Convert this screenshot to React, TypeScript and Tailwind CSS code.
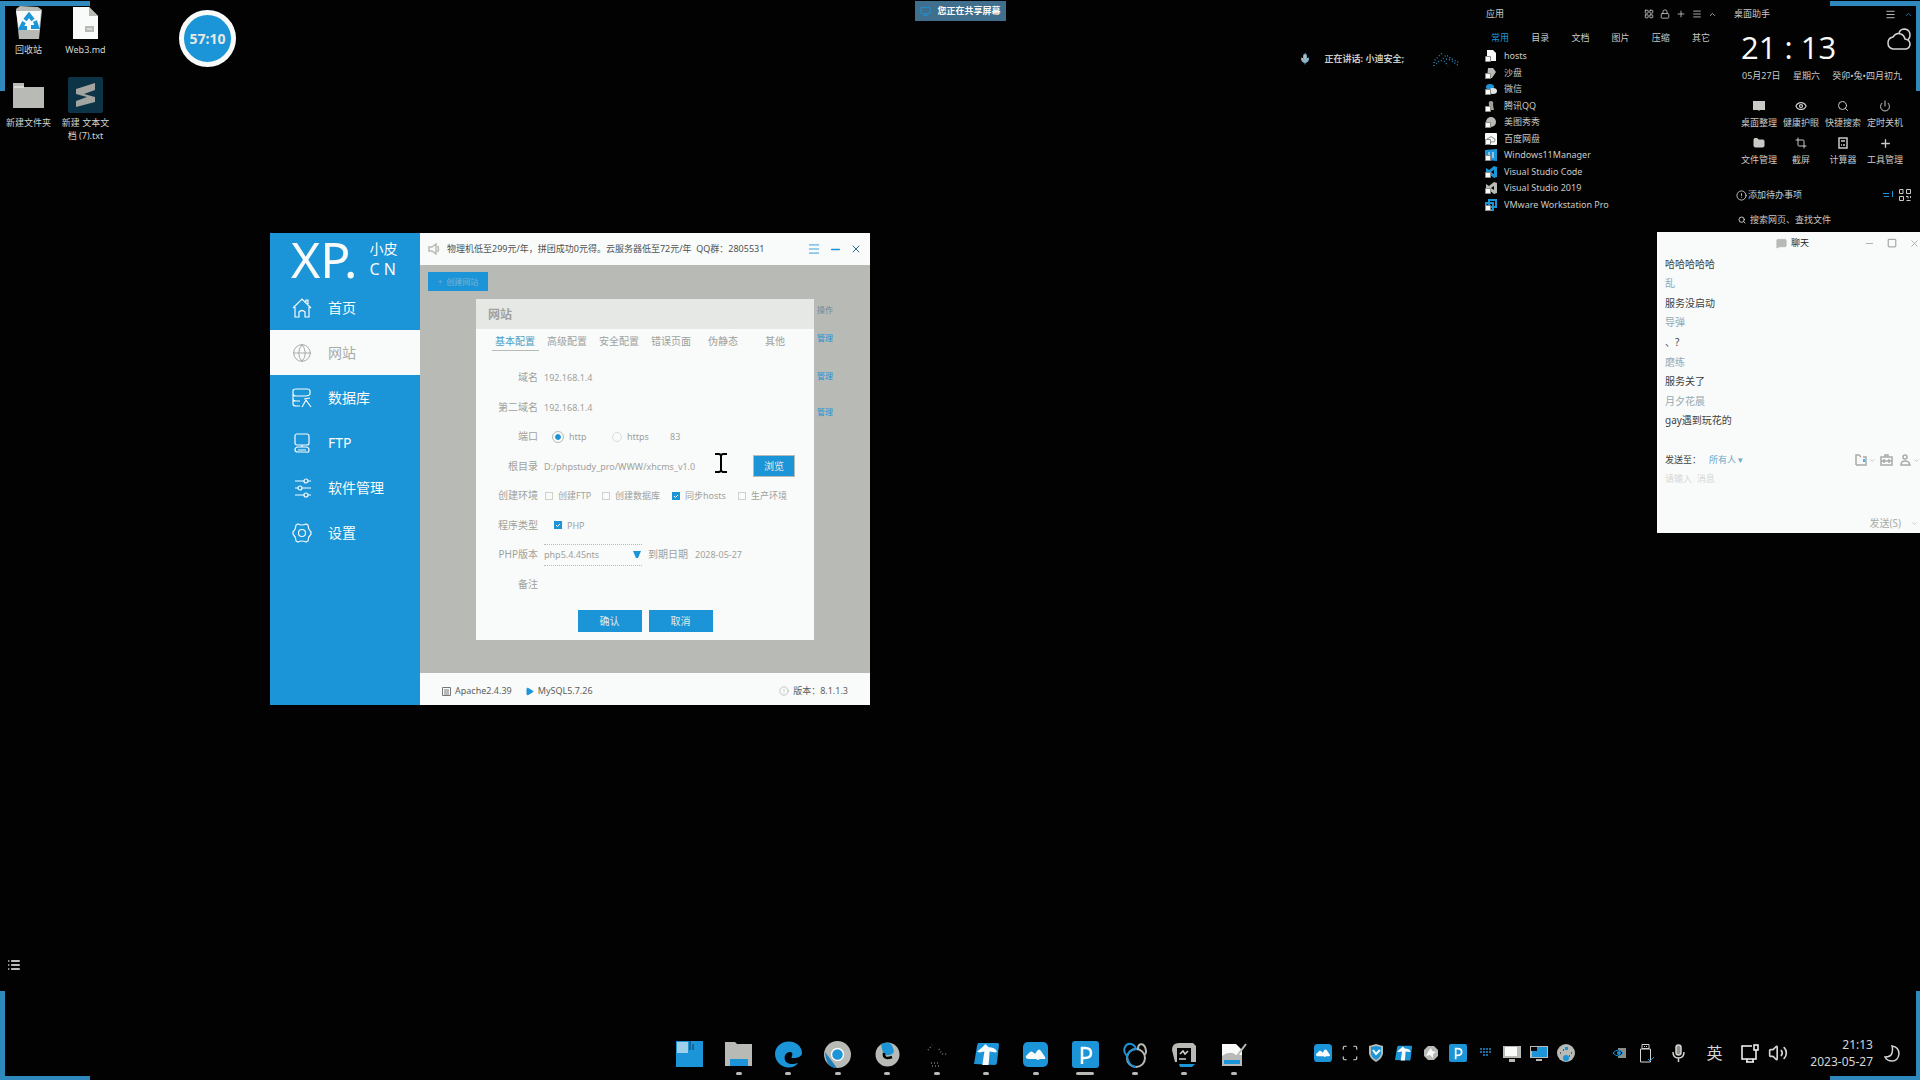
import React, { useState } from "react";
import {
  Globe, Monitor, Menu, Minus, X,
  Plus, ChevronUp, ChevronDown, LayoutGrid, Lock, Cloud, Eye, Search, Power, Folder, Crop,
  Mic, MessageSquare, Square, CircleAlert, Play,
  Scan, List, Volume2,
} from "lucide-react";

const CJK = "font-['Noto_Sans','Noto_Sans_CJK_SC',sans-serif]";

function Corners() {
  return (
    <div aria-hidden="true">
      <div className="absolute left-0 top-px h-[90px] w-[90px] border-l-[5px] border-t-[5px] border-[#2f89bd]" />
      <div className="absolute right-0 top-px h-[90px] w-[90px] border-r-4 border-t-[5px] border-[#2f89bd]" />
      <div className="absolute bottom-0 left-0 h-[89px] w-[90px] border-b-4 border-l-[5px] border-[#2f89bd]" />
      <div className="absolute bottom-0 right-0 h-[89px] w-[90px] border-b-4 border-r-4 border-[#2f89bd]" />
    </div>
  );
}

function DesktopIcon({ label, children }: { label: string; children: React.ReactNode }) {
  return (
    <button className="flex w-[57px] flex-col items-center">
      <span className="flex h-[37px] items-end justify-center">{children}</span>
      <span className="mt-[3px] w-[50px] text-center text-[9px] leading-[13px] text-[#d3d5d1]">{label}</span>
    </button>
  );
}

function DesktopIcons() {
  return (
    <div className="absolute left-0 top-[3px] grid grid-cols-[57px_57px] items-start gap-y-5">
      <DesktopIcon label="回收站">
        <svg width="28" height="34" viewBox="0 0 28 34">
          <path d="M1 3 5 0l18 1 4 3-3 29H4z" fill="#b8bab5" />
          <path d="M1 5h25l-2 19H4z" fill="#f9fbfa" />
          <g stroke="#1c94d8" strokeWidth="4" fill="none">
            <path d="m10 14 4-5 4 5" /><path d="m20 15 2 6h-6" /><path d="m12 22H6l3-6" />
          </g>
        </svg>
      </DesktopIcon>
      <DesktopIcon label="Web3.md">
        <svg width="26" height="34" viewBox="0 0 26 34">
          <path d="M0 1h16l9 9v23H0z" fill="#f9fbfa" />
          <path d="M16 1v9h9z" fill="#b8bab5" />
          <path d="M12 20h9v6h-9z" fill="#b8bab5" />
          <path d="M14 23h5" stroke="#f9fbfa" />
        </svg>
      </DesktopIcon>
      <DesktopIcon label="新建文件夹">
        <svg width="31" height="28" viewBox="0 0 31 28" className="mb-1">
          <path d="M0 2h11v4h20v21H0z" fill="#b8bab5" />
          <path d="M1 6h10" stroke="#f9fbfa" />
        </svg>
      </DesktopIcon>
      <DesktopIcon label="新建 文本文档 (7).txt">
        <svg width="35" height="36" viewBox="0 0 35 36">
          <rect width="35" height="36" rx="2" fill="#0d3347" />
          <path d="M8 12 27 6v7l-11 4 11 3v5L8 30v-6l11-4-11-3z" fill="#a3a5a1" />
        </svg>
      </DesktopIcon>
    </div>
  );
}

const APPS: [string, React.ReactNode][] = [
  ["hosts", <path key="0" d="M2 0h6l3 3v8H2z" fill="#f9fbfa" />],
  ["沙盘", <path key="1" d="M3 1h5l3 4-4 6H2z" fill="#b8bab5" />],
  ["微信", <g key="2"><ellipse cx="5" cy="4" rx="4" ry="3" fill="#1c94d8" /><ellipse cx="8" cy="8" rx="4" ry="3" fill="#e3e5e2" /></g>],
  ["腾讯QQ", <path key="3" d="M6 1q3 0 2 4l1 5H3l1-5q-1-4 2-4z" fill="#9fa19d" />],
  ["美图秀秀", <circle key="4" cx="6" cy="6" r="5" fill="#b8bab5" />],
  ["百度网盘", <g key="5"><rect width="12" height="12" rx="1" fill="#f9fbfa" /><path d="M2 7q0-2 2-2 2-3 4 0 2 0 2 2t-2 2H4Q2 9 2 7z" stroke="#8b8d89" fill="none" /></g>],
  ["Windows11Manager", <g key="6"><path d="M0 1 12 0v12L0 11z" fill="#1c94d8" /><path d="M4 3v6M8 3v6" stroke="#f9fbfa" /></g>],
  ["Visual Studio Code", <path key="7" d="m9 0 3 1v10l-3 1-5-4-3 2V2l3 2zM9 4 6 6l3 2z" fill="#1c94d8" />],
  ["Visual Studio 2019", <path key="8" d="m9 0 3 1v10l-3 1-5-4-3 2V2l3 2zM9 4 6 6l3 2z" fill="#b8bab5" />],
  ["VMware Workstation Pro", <path key="9" d="M4 1h7v7H4zM1 4h7v7H1z" stroke="#1c94d8" strokeWidth="2" fill="none" />],
];

function AppPanel() {
  const tabs = ["常用", "目录", "文档", "图片", "压缩", "其它"];
  return (
    <section className="absolute right-[199px] top-2 w-[241px] text-[9px] leading-3 text-[#c8cac6]">
      <header className="flex items-center justify-between pl-[6px] pr-1">
        <h2>应用</h2>
        <div className="flex items-center gap-[6px]">
          <button aria-label="网格"><LayoutGrid size={10} /></button>
          <button aria-label="锁定"><Lock size={10} /></button>
          <button aria-label="添加"><Plus size={10} /></button>
          <button aria-label="菜单"><Menu size={10} /></button>
          <button aria-label="收起"><ChevronUp size={9} /></button>
        </div>
      </header>
      <nav className="mt-3 grid grid-cols-6">
        {tabs.map((t, i) => (
          <button key={t} className={i === 0 ? "text-[#1c94d8]" : ""}>{t}</button>
        ))}
      </nav>
      <ul className="mt-[6px] flex h-[161px] flex-col justify-between pl-[5px]">
        {APPS.map(([name, art]) => (
          <li key={name}>
            <button className="flex items-center gap-[7px]">
              <svg width="12" height="12" viewBox="0 0 12 12">
                {art}
                <path d="M.5 6.500h5v5h-5z" fill="#f9fbfa" stroke="#8b8d89" />
              </svg>
              <span className="whitespace-nowrap">{name}</span>
            </button>
          </li>
        ))}
      </ul>
    </section>
  );
}

function Assistant() {
  const tools: [string, React.ReactNode][] = [
    ["桌面整理", <svg key="a" width="12" height="10"><path d="M0 0h12v9H7l-1 1-1-1H0z" fill="currentColor" /></svg>],
    ["健康护眼", <Eye key="b" size={12} strokeWidth={2.5} />],
    ["快捷搜索", <Search key="c" size={12} />],
    ["定时关机", <Power key="d" size={12} />],
    ["文件管理", <Folder key="e" size={12} fill="currentColor" />],
    ["截屏", <Crop key="f" size={12} />],
    ["计算器", <svg key="g" width="10" height="12"><path d="M1 1h8v10H1zM3 4h4M3 8h1M5 8h2" stroke="currentColor" strokeWidth="1.500" fill="none" /></svg>],
    ["工具管理", <Plus key="h" size={13} strokeWidth={2.5} />],
  ];
  return (
    <section className="absolute right-0 top-2 w-[186px] text-[9px] leading-3 text-[#c8cac6]">
      <header className="flex items-center justify-between pr-[7px]">
        <h2>桌面助手</h2>
        <div className="flex items-center gap-2">
          <button aria-label="菜单"><Menu size={11} /></button>
          <button aria-label="收起" className="text-[#1c94d8]"><ChevronUp size={9} /></button>
        </div>
      </header>
      <div className="flex items-start justify-between pl-[7px] pr-2">
        <time className="mt-[7px] whitespace-pre font-['Open_Sans','Noto_Sans',sans-serif] text-[31px] leading-10 text-[#f9fbfa]">21 : 13</time>
        <svg width="25" height="24" viewBox="0 0 25 24" className="mt-2 text-[#d3d5d1]" fill="none" stroke="currentColor" strokeWidth="1.500">
          <path d="M6 21q-5-1-5-6 0-5 5-6 3-5 8-3 3 1 4 5 5 1 5 5t-4 5z" />
          <path d="M12 5q1-4 6-4 5 1 5 6 0 3-2 5" />
        </svg>
      </div>
      <div className="mt-px flex justify-between whitespace-nowrap pl-2 pr-[18px] pt-[2px]">
        <span>05月27日</span><span>星期六</span><span>癸卯•兔•四月初九</span>
      </div>
      <div className="mt-[18px] grid w-[172px] grid-cols-4 gap-y-2 pl-1">
        {tools.map(([n, icon]) => (
          <button key={n} className="flex flex-col items-center gap-[5px] whitespace-nowrap">
            <span className="flex h-3 items-center">{icon}</span>
            <span>{n}</span>
          </button>
        ))}
      </div>
      <div className="mt-[23px] flex items-center justify-between pl-[2px] pr-[9px]">
        <button className="flex items-center gap-px"><CircleAlert size={11} />添加待办事项</button>
        <span className="flex items-center gap-[6px]">
          <svg width="10" height="9" className="text-[#1c94d8]" stroke="currentColor"><path d="M0 2.500h6M1 5.500h5M9.500 0v6" /></svg>
          <svg width="12" height="12" stroke="currentColor" fill="none"><path d="M1 .5h3v4H.5v-4M7.500.5h4v4h-4zM.5 7.500h4v4h-4zM7 7.500h2v2M11.500 7v2M7.500 11.500h4" /></svg>
        </span>
      </div>
      <label className="mt-[13px] flex items-center gap-1 pl-1">
        <Search size={8} strokeWidth={3} />
        <input aria-label="搜索" placeholder="搜索网页、查找文件" className="w-32 bg-transparent leading-3 outline-none placeholder:text-[#c8cac6]" />
      </label>
    </section>
  );
}

function Line({ children }: { children: React.ReactNode }) {
  return <svg width="20" height="20" viewBox="0 0 20 20" fill="none" stroke="currentColor" strokeWidth="1.200">{children}</svg>;
}

const MENU: [string, React.ReactNode][] = [
  ["首页", <Line key="1"><path d="M1 10 10 1l9 9M14 4V2h2v4M3 9v10h4v-5q3-3 6 0v5h4V9" /></Line>],
  ["网站", <Globe key="2" size={20} strokeWidth={1.2} />],
  ["数据库", <Line key="3"><path d="M1 3q0-2 3-2h11q3 0 3 2v3q-1 2-4 2H4Q1 8 1 5zM1 6v5q0 2 3 2h4M1 11v5q0 2 3 2h4M10 19l4-7 5 7M12 11l6-1" /></Line>],
  ["FTP", <Line key="4"><rect x="3" y="1" width="14" height="11" rx="2" /><path d="M10 12v2M3 17q0-3 3-3h8q3 0 3 3t-3 2H6q-3 0-3-2zM6 17h8" /></Line>],
  ["软件管理", <Line key="5"><path d="M3 3h9M16 3h3M3 10h3M10 10h9M3 17h9M16 17h3" /><circle cx="14" cy="3" r="2" /><circle cx="8" cy="10" r="2" /><circle cx="14" cy="17" r="2" /></Line>],
  ["设置", <Line key="6"><path d="M6 1q4 2 8 0l2 1q0 4 3 7v2q-3 3-3 7l-2 1q-4-2-8 0l-2-1q0-4-3-7V9q3-3 3-7z" /><circle cx="10" cy="10" r="3.500" /></Line>],
];

function Row({ label, htmlFor, children }: { label: string; htmlFor?: string; children?: React.ReactNode }) {
  return (
    <div className="grid grid-cols-[62px_1fr] items-center gap-x-[6px]">
      <label htmlFor={htmlFor} className="whitespace-nowrap text-right text-[10px]">{label}</label>
      <div className="flex items-center text-[9px]">{children}</div>
    </div>
  );
}

function Check({ label, on, className = "" }: { label: string; on?: boolean; className?: string }) {
  return (
    <label className={`flex items-center gap-[5px] whitespace-nowrap ${className}`}>
      <span className="relative flex h-[8px] w-[8px]">
        <input type="checkbox" defaultChecked={on} className="peer h-[8px] w-[8px] appearance-none border border-[#cfd1cd] checked:border-[#1c94d8] checked:bg-[#1c94d8]" />
        <svg viewBox="0 0 8 8" className="pointer-events-none absolute inset-0 hidden peer-checked:block"><path d="m2 4 1.500 1.500L6 3" stroke="#f9fbfa" fill="none" /></svg>
      </span>
      {label}
    </label>
  );
}

function SiteDialog() {
  const tabs = ["基本配置", "高级配置", "安全配置", "错误页面", "伪静态", "其他"];
  return (
    <form role="dialog" aria-label="网站" onSubmit={(e) => e.preventDefault()} className="absolute left-[56px] top-[34px] flex h-[341px] w-[338px] flex-col bg-[#f9fbfa] text-[#9fa19d]">
      <h3 className="h-[30px] bg-[#e6e8e5] pl-3 text-[12px] font-bold leading-[32px]">网站</h3>
      <div className="flex h-[34px] items-start px-[13px] pt-[3px] text-[10px]">
        {tabs.map((t, i) => (
          <button key={t} type="button" className="w-[52px]">
            <span className={i === 0 ? "mx-auto block h-[19px] w-[47px] border-b border-[#b8bab5] leading-[18px] text-[#4f9cc4]" : "block h-[19px] leading-[18px]"}>{t}</span>
          </button>
        ))}
      </div>
      <div className="grid flex-1 auto-rows-fr">
        <Row label="域名" htmlFor="domain"><input id="domain" defaultValue="192.168.1.4" className="w-48 bg-transparent outline-none" /></Row>
        <Row label="第二域名" htmlFor="domain2"><input id="domain2" defaultValue="192.168.1.4" className="w-48 bg-transparent outline-none" /></Row>
        <Row label="端口" htmlFor="port">
          <label className="ml-2 flex w-[60px] items-center gap-[5px]">
            <input type="radio" name="scheme" defaultChecked className="h-[12px] w-[12px] appearance-none rounded-full border border-[#b8bab5] bg-[#f9fbfa] checked:bg-[radial-gradient(#1c94d8_35%,#f9fbfa_45%)]" />http
          </label>
          <label className="flex w-[58px] items-center gap-[5px]">
            <input type="radio" name="scheme" className="h-[10px] w-[10px] appearance-none rounded-full border border-[#dcdedb]" />https
          </label>
          <input id="port" defaultValue="83" className="w-8 bg-transparent outline-none" />
        </Row>
        <Row label="根目录" htmlFor="root">
          <input id="root" defaultValue="D:/phpstudy_pro/WWW/xhcms_v1.0" className="w-[209px] bg-transparent outline-none" />
          <button type="button" className="h-[22px] w-[42px] border border-[#b8bab5] bg-[#1c94d8] text-[10px] text-[#e6e8e5]">浏览</button>
        </Row>
        <Row label="创建环境">
          <Check label="创建FTP" className="w-[58px] pl-px" />
          <Check label="创建数据库" className="w-[70px]" />
          <Check label="同步hosts" on className="w-[66px]" />
          <Check label="生产环境" />
        </Row>
        <Row label="程序类型"><Check label="PHP" on className="pl-[10px]" /></Row>
        <Row label="PHP版本" htmlFor="php">
          <span className="relative mr-[6px] flex h-[22px] w-[98px] items-center border-y border-dotted border-[#b8bab5]">
            <select id="php" className="w-full appearance-none bg-transparent outline-none"><option>php5.4.45nts</option></select>
            <svg width="8" height="7" className="pointer-events-none absolute right-px top-[6px]"><path d="M0 0h8L5 7H3z" fill="#1c94d8" /></svg>
          </span>
          <label htmlFor="expiry" className="w-[47px] text-[10px]">到期日期</label>
          <input id="expiry" defaultValue="2028-05-27" className="w-20 bg-transparent outline-none" />
        </Row>
        <Row label="备注" htmlFor="memo"><input id="memo" className="w-48 bg-transparent outline-none" /></Row>
      </div>
      <div className="flex h-[41px] items-start justify-center gap-[7px] pt-[11px] text-[10px] text-[#e6e8e5]">
        <button type="submit" className="h-[22px] w-[64px] bg-[#1c94d8]">确认</button>
        <button type="button" className="h-[22px] w-[64px] bg-[#1c94d8]">取消</button>
      </div>
    </form>
  );
}

function PhpStudy() {
  const [active, setActive] = useState("网站");
  return (
    <section className="absolute left-[270px] top-[233px] flex h-[472px] w-[600px] bg-[#f9fbfa]">
      <aside className="w-[150px] bg-[#1c94d8] text-[#f9fbfa]">
        <div className="flex h-[52px] items-center gap-3 pl-[21px]">
          <span className="font-['Noto_Sans',sans-serif] text-[50px] leading-[50px]">XP.</span>
          <span className="flex flex-col whitespace-nowrap text-[14px] leading-5"><span>小皮</span><span className="text-[16px]">C N</span></span>
        </div>
        <nav>
          {MENU.map(([name, icon]) => (
            <button
              key={name}
              onClick={() => setActive(name)}
              className={name === active
                ? "flex h-[45px] w-full items-center bg-[#f9fbfa] pl-[22px] text-[14px] text-[#a9aba7]"
                : "flex h-[45px] w-full items-center pl-[22px] text-[14px]"}
            >
              <span className="w-9">{icon}</span>{name}
            </button>
          ))}
        </nav>
      </aside>
      <div className="flex flex-1 flex-col">
        <header className="flex h-8 items-center pl-2 pr-2 text-[9px] text-[#4f5150]">
          <svg width="12" height="12" viewBox="0 0 12 12" stroke="#b8bab5" strokeWidth="1.500" fill="none"><path d="M1 4h3l4-3v10L4 8H1zM9.500 3q2 3 0 6" /></svg>
          <p className="ml-[7px] flex-1 whitespace-pre pb-px">物理机低至299元/年，拼团成功0元得。云服务器低至72元/年  QQ群：2805531</p>
          <div className="flex items-center gap-2 text-[#1c94d8]">
            <button aria-label="菜单"><Menu size={14} strokeWidth={1.5} /></button>
            <button aria-label="最小化"><Minus size={13} strokeWidth={3} /></button>
            <button aria-label="关闭" className="text-[#2b6f96]"><X size={12} /></button>
          </div>
        </header>
        <main className="relative flex-1 bg-[#b8bab5]">
          <button className="ml-2 mt-[7px] block h-[19px] w-[60px] bg-[#1c94d8] text-[8px] text-[#7fb1cb]">+&nbsp; 创建网站</button>
          <div className="absolute right-[37px] top-[39px] flex flex-col text-[8px] text-[#1c94d8]">
            <span className="h-7 text-[#6d8a98]">操作</span>
            <a href="#m1" className="h-[38px]">管理</a>
            <a href="#m2" className="h-9">管理</a>
            <a href="#m3">管理</a>
          </div>
          <SiteDialog />
          <svg width="12" height="20" viewBox="0 0 12 20" className="absolute left-[295px] top-[188px]" aria-hidden="true">
            <path d="M0 1h4l2 1 2-1h4M6 2v16M0 19h4l2-1 2 1h4" stroke="#020202" strokeWidth="2" fill="none" />
          </svg>
        </main>
        <footer className="flex h-8 items-center pl-[22px] pr-[22px] pt-1 text-[9px] text-[#5c5e5c]">
          <svg width="9" height="9" className="mr-1"><path d="M.5.5h8v8h-8zM2 3h5M2 5h5M2 7h5" stroke="#777" fill="none" /></svg>
          <span>Apache2.4.39</span>
          <Play size={9} className="ml-[13px] mr-1 fill-[#1c94d8] text-[#1c94d8]" />
          <span>MySQL5.7.26</span>
          <CircleAlert size={10} className="ml-auto mr-1 text-[#b8bab5]" />
          <span>版本：8.1.1.3</span>
        </footer>
      </div>
    </section>
  );
}

function Chat() {
  const rows: [string, boolean][] = [
    ["哈哈哈哈哈", false], ["乱", true], ["服务没启动", false], ["导弹", true], ["、?", false],
    ["磨练", true], ["服务关了", false], ["月夕花晨", true], ["gay遇到玩花的", false],
  ];
  return (
    <section className="absolute right-0 top-[232px] flex h-[301px] w-[263px] flex-col overflow-hidden bg-[#f9fbfa] pl-2 text-[10px] text-[#3f4140]">
      <header className="grid h-[22px] grid-cols-[1fr_auto_1fr] items-center text-[9px] text-[#222]">
        <span />
        <h2 className="flex items-center gap-1"><MessageSquare size={11} className="fill-[#b8bab5] text-[#b8bab5]" />聊天</h2>
        <div className="flex items-center justify-end gap-3 text-[#a9aba7]">
          <button aria-label="最小化"><Minus size={11} /></button>
          <button aria-label="最大化"><Square size={10} strokeWidth={3} /></button>
          <button aria-label="关闭"><X size={11} /></button>
        </div>
      </header>
      <ul className="flex h-[176px] flex-col justify-around">
        {rows.map(([t, name]) => <li key={t} className={name ? "leading-4 text-[#93a9b4]" : "leading-4"}>{t}</li>)}
      </ul>
      <div className="mt-[22px] flex h-4 items-center text-[9px]">
        <label htmlFor="to">发送至：</label>
        <select id="to" className="ml-2 appearance-none bg-transparent text-[#6da9c9]"><option>所有人 ▾</option></select>
        <div className="ml-auto flex items-center text-[#a9aba7]">
          <svg width="12" height="12" fill="none" stroke="currentColor" strokeWidth="1.500"><path d="M1 11V1h3l2 2M8 3h3v8H1" /><path d="M9 5v3" stroke="#1c94d8" /></svg>
          <ChevronDown size={7} className="ml-[2px]" />
          <svg width="13" height="12" className="ml-1" fill="none" stroke="currentColor" strokeWidth="1.500"><path d="M1 3h11v8H1zM5 3V1h3v2M1 7h11M4 5v4M9 5v4" /></svg>
          <svg width="11" height="12" className="ml-[7px]" fill="none" stroke="currentColor" strokeWidth="1.500"><circle cx="5" cy="3" r="2" /><path d="M1 11q0-4 4-4t5 4z" /></svg>
          <ChevronDown size={7} className="ml-[2px]" />
        </div>
      </div>
      <textarea aria-label="消息" placeholder="请输入  消息" className="mt-1 flex-1 resize-none bg-transparent text-[9px] outline-none placeholder:text-[#d5d7d4]" />
      <div className="flex h-5 items-center justify-end gap-[10px] pr-[2px] text-[#a9aba7]">
        <button>发送(S)</button><ChevronDown size={7} />
      </div>
    </section>
  );
}

function TaskTile({ children, running = "small" }: { children: React.ReactNode; running?: "none" | "small" | "wide" }) {
  return (
    <button className="flex w-[27px] flex-col items-center">
      <span className="flex h-[27px] w-[27px] items-center justify-center">{children}</span>
      <span className={running === "none" ? "mt-1 h-[3px]" : running === "wide" ? "mt-1 h-[3px] w-[18px] rounded bg-[#b8bab5]" : "mt-1 h-[3px] w-[6px] rounded bg-[#b8bab5]"} />
    </button>
  );
}

function TIcon({ size }: { size: number }) {
  return (
    <svg width={size} height={size} viewBox="0 0 24 24">
      <path d="M4 1h19q1 0 1 2l-2 17q0 2-2 2L0 21 3 3z" fill="#1c94d8" />
      <path d="m3 9 5-4 3-3 3 3q6 0 8 4l-1 1-6-1-1 13H8l2-13-5 1z" fill="#f9fbfa" />
    </svg>
  );
}
function MIcon({ size }: { size: number }) {
  return (
    <svg width={size} height={size} viewBox="0 0 25 25">
      <rect width="25" height="25" rx="5" fill="#1c94d8" />
      <path d="M3 16q-1-2 1-3l2-2q2-3 5 0l1 1 2-3q2-3 4 0l4 6q1 2-1 2h-4l-2 1-2-1H5z" fill="#f9fbfa" />
    </svg>
  );
}
function PIcon({ size }: { size: number }) {
  return (
    <svg width={size} height={size} viewBox="0 0 27 27">
      <rect width="27" height="27" rx="3" fill="#1c94d8" />
      <path d="M10 23V7h3q6 0 6 5t-6 5h-3" stroke="#f9fbfa" strokeWidth="2.500" fill="none" />
    </svg>
  );
}

function Tray() {
  return (
    <div className="flex h-6 items-center justify-end pr-[10px]">
      <div className="grid grid-cols-[repeat(10,27px)] items-center justify-items-center">
        <MIcon size={18} />
        <Scan size={18} strokeWidth={1.5} />
        <svg width="17" height="18" viewBox="0 0 17 18"><path d="M1 2 8 0l7 2v7q0 5-7 9-7-4-7-9z" fill="#b8bab5" /><path d="M3 3 8 2l5 1v6q0 4-5 7-5-3-5-7z" fill="#1c94d8" /><path d="m5 6 3 4 4-4" stroke="#f9fbfa" strokeWidth="2" fill="none" /></svg>
        <TIcon size={17} />
        <svg width="16" height="16" viewBox="0 0 16 16"><path d="M5 1h6l4 4v6l-4 4H5l-4-4V5z" fill="#b8bab5" /><path d="m8 3 1 3 4 1-3 2v4L7 10l-4 1 2-4z" fill="#f9fbfa" /></svg>
        <PIcon size={18} />
        <svg width="12" height="14"><path d="M2 2v6M5 2v8M8 2v8M11 2v6" stroke="#1c6c9c" strokeWidth="2" strokeDasharray="2 1" /></svg>
        <svg width="18" height="17"><path d="M0 1h18v12H0zM6 14h6v3H6z" fill="#b8bab5" /><path d="M2 2h12v9H2z" fill="#f9fbfa" /></svg>
        <svg width="18" height="17"><path d="M0 1h18v12H0zM6 14h6v2H6z" fill="#b8bab5" /><path d="M2 2h15v10H2z" fill="#1c94d8" /><path d="M1 2h6v4H1z" fill="#020202" /></svg>
        <svg width="18" height="18"><circle cx="9" cy="9" r="9" fill="#b8bab5" /><circle cx="9" cy="14" r="3" fill="#1c94d8" /><path d="M8 3h3v3H8z" fill="#1c94d8" /><path d="M3 9h1M14 9h1M6 6h1M12 12h1" stroke="#020202" /></svg>
      </div>
      <span className="ml-[27px] flex w-[27px] justify-center"><svg width="13" height="10"><path d="M5 0h8v10H5z" fill="#8b8d89" /><path d="M0 5q6-6 10 0-4 6-10 0z" fill="#020202" stroke="#1c94d8" /><circle cx="6" cy="5" r="2" fill="#1c94d8" /></svg></span>
      <span className="flex w-[27px] justify-center"><svg width="14" height="19" fill="none" stroke="currentColor"><path d="M2 .5h7v4H2zM.5 5h10v13H.5z" /><path d="M4 2.500h1M6 2.500h1" /><path d="m8 15 2 2 4-4" stroke="#1c94d8" /></svg></span>
      <span className="flex w-[37px] justify-center"><svg width="13" height="18" viewBox="0 0 13 18" fill="none" stroke="currentColor" strokeWidth="1.500"><rect x="4" y="1" width="5" height="10" rx="2.500" fill="#8b8d89" /><path d="M1 8q0 6 5.500 6T12 8M6.500 14v4" /></svg></span>
      <span className="w-[35px] text-center text-[16px] leading-6">英</span>
      <span className="flex w-[35px] justify-center"><svg width="18" height="19" viewBox="0 0 18 19" fill="none" stroke="#f9fbfa" strokeWidth="1.500"><path d="M11 2H1v13h14V9M5 18h8M6 15v3M12 15v3" /><path d="M13 1h4v5h-4zM15 6v3" /></svg></span>
      <span className="flex w-[21px] justify-center"><Volume2 size={20} /></span>
      <time className="w-[85px] text-right text-[12px] leading-[17px]">21:13<br />2023-05-27</time>
      <span className="flex w-[37px] justify-center"><svg width="16" height="17" fill="none" stroke="currentColor" strokeWidth="1.500"><path d="M8 1q7 1 7 8-1 7-7 7-5 0-7-4 6 0 7-4 1-4 0-7z" /></svg></span>
    </div>
  );
}

function Taskbar() {
  return (
    <footer className="absolute inset-x-0 bottom-0 grid h-[45px] grid-cols-[1fr_572px_1fr] items-start pl-[3px] pt-[6px] text-[#d3d5d1]">
      <span />
      <nav className="flex justify-between">
        <TaskTile running="none"><svg width="27" height="27"><path d="M0 0h27v26H0z" fill="#1c94d8" /><path d="M1 1h11v11H1z" fill="#9fd0ea" /><path d="M14 0v9M17 3v6" stroke="#0c3a54" /></svg></TaskTile>
        <TaskTile><svg width="27" height="25"><path d="M0 0h10l2 2h15v22H0z" fill="#b8bab5" /><path d="M5 17h18v7H5z" fill="#1c94d8" /></svg></TaskTile>
        <TaskTile><svg width="28" height="27" viewBox="0 0 28 27"><path d="M14 0C6 0 0 6 0 13s6 14 14 14c5 0 8-2 10-5-6 3-14 1-14-5 0-4 3-6 6-6 3 0 2 4 1 6 5 1 11-1 11-5C28 5 22 0 14 0z" fill="#1c94d8" /></svg></TaskTile>
        <TaskTile><svg width="27" height="27" viewBox="0 0 27 27"><circle cx="13.500" cy="13.500" r="13.500" fill="#b8bab5" /><path d="M1 11 13 27Q2 27 1 11z" fill="#1c7fb8" /><circle cx="13.500" cy="13.500" r="6" fill="#1c94d8" stroke="#f9fbfa" strokeWidth="1.500" /></svg></TaskTile>
        <TaskTile><svg width="25" height="25" viewBox="0 0 25 25"><circle cx="12.500" cy="12.500" r="12" fill="#b8bab5" /><path d="M6 2q10-4 12 4 2 5-1 6-3 2-8 1Q7 8 6 2z" fill="#1c94d8" /><path d="M9 11q-1 7 8 4" stroke="#020202" strokeWidth="2.500" fill="none" /></svg></TaskTile>
        <TaskTile><svg width="20" height="24" viewBox="0 0 20 24"><path d="M1 7 5 2M12 6l3 5h5M4 20h9M5 23h7" stroke="#777" strokeDasharray="1 2" strokeWidth="1.500" fill="none" /></svg></TaskTile>
        <TaskTile><TIcon size={25} /></TaskTile>
        <TaskTile><MIcon size={25} /></TaskTile>
        <TaskTile running="wide"><PIcon size={27} /></TaskTile>
        <TaskTile><svg width="26" height="26" viewBox="0 0 26 26" fill="none" strokeWidth="2"><circle cx="14" cy="16" r="9" stroke="#b8bab5" /><path d="M5 14C-1 8 4 1 9 2q4 1 5 5-6 0-9 7zM5 14q1 10 9 11" stroke="#1c94d8" /><path d="M16 7c0-6 5-6 7-2 2 5 1 7-1 8" stroke="#b8bab5" /></svg></TaskTile>
        <TaskTile><svg width="26" height="26" viewBox="0 0 26 26"><path d="M1 8Q1 1 8 1h14l3 3v16H4z" fill="#b8bab5" /><path d="M6 6h14v14H6z" fill="#020202" /><path d="M8 17h7M9 12l3-3 2 3 3-3" stroke="#d3d5d1" strokeWidth="1.500" fill="none" /><path d="M8 22h16l-3 3H9z" fill="#1c94d8" /></svg></TaskTile>
        <TaskTile><svg width="26" height="25" viewBox="0 0 26 25"><path d="M1 2h14l6 6v16H1z" fill="#f9fbfa" /><path d="M1 24V14q8-6 14-1h6v11z" fill="#b8bab5" /><path d="M3 18h16v4H3z" fill="#1c94d8" /><path d="M16 14 25 2" stroke="#b8bab5" strokeWidth="2" /></svg></TaskTile>
      </nav>
      <Tray />
    </footer>
  );
}

export default function App() {
  return (
    <div className={`relative min-h-screen w-full overflow-hidden bg-[#020202] ${CJK}`}>
      <Corners />
      <DesktopIcons />
      <div className="absolute left-[179px] top-[10px] flex h-[57px] w-[57px] items-center justify-center rounded-full border-[5px] border-[#f9fbfa] bg-[#1c94d8] text-[14px] font-bold text-[#e6e8e5]">57:10</div>
      <div className="absolute left-[915px] top-px flex h-5 w-[91px] items-center justify-center gap-[6px] bg-[#3f6f8c] text-[9px] font-bold text-[#f9fbfa]">
        <Monitor size={11} className="text-[#1c94d8]" />您正在共享屏幕
      </div>
      <div className="absolute right-[458px] top-[50px] flex h-[18px] items-center text-[9px] font-bold text-[#c8cac6]">
        <Mic size={12} className="mr-[14px] fill-[#b8bab5] text-[#6da9c9]" />正在讲话: 小迪安全;
        <svg width="30" height="17" viewBox="0 0 30 17" className="ml-7" fill="none" stroke="#2b7fae" strokeDasharray="1 2" strokeWidth="1.500">
          <path d="M2 15V10l5-5 4-4M9 10l5-6 6 4 8 4M12 10l4 5M7 10l-4 4M20 10l7 5M14 8l5 1" />
        </svg>
      </div>
      <AppPanel />
      <Assistant />
      <PhpStudy />
      <Chat />
      <button aria-label="列表" className="absolute bottom-[108px] left-[7px] text-[#f9fbfa]"><List size={14} strokeWidth={2.5} /></button>
      <Taskbar />
    </div>
  );
}
